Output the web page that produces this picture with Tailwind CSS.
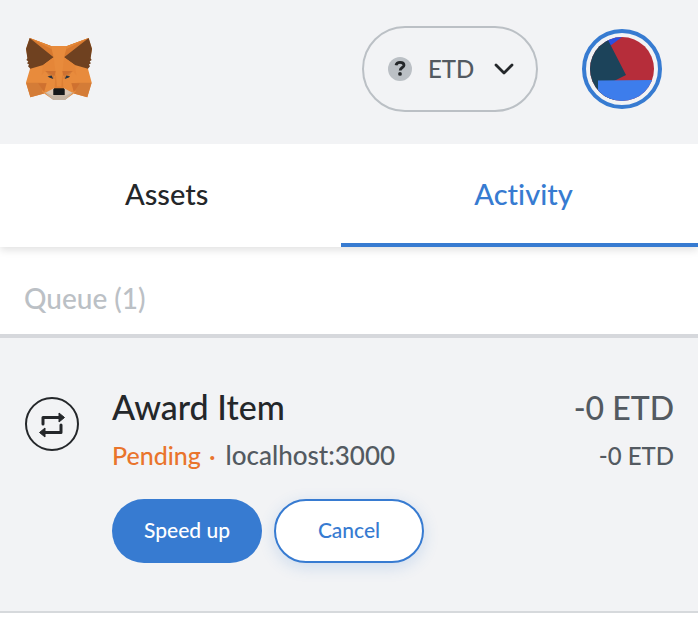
<!DOCTYPE html>
<html lang="en">
<head>
<meta charset="utf-8">
<meta name="viewport" content="width=device-width, initial-scale=1">
<title>MetaMask</title>
<script src="https://cdn.jsdelivr.net/npm/@tailwindcss/browser@4"></script>
</head>
<body class="bg-white font-[Lato,sans-serif] font-medium text-[#24272a] [font-variant-ligatures:none]">
<header class="relative z-10 flex h-36 items-center justify-between bg-[#f2f3f5] pt-[26px] pr-9 pb-8 pl-[26px]">
  <a href="#" aria-label="MetaMask home">
    <svg class="h-[62px] w-[66px]" viewBox="36 37 196 184" aria-hidden="true">
      <path fill="#e88b3c" d="M47 37 110 61H158L222 37 232 70 220 128 231 169 218 213 178 202 152 220H117L90 202 49 213 36 169 48 128 36 70Z"/>
      <path fill="#d8792f" d="M47 37 118 94 110 61ZM222 37 149 94 158 61Z"/>
      <path fill="#e38737" d="M47 37 110 61 113 70ZM222 37 158 61 155 70Z"/>
      <path fill="#6f4120" d="M47 37 118 94 87 117 49 128 42 121 45 116 39 112 43 107 37 102 40 97 36 69ZM222 37 149 94 181 117 220 128 226 121 223 116 229 112 225 107 231 102 228 97 232 69Z"/>
      <path fill="#d47c37" d="M36 170H77L97 171 83 196 90 202 49 213ZM231 170H192L171 171 184 196 178 202 218 213ZM93 135 117 137 121 158 110 154ZM175 135 151 137 147 158 158 154Z"/>
      <path fill="#e58638" d="M87 117 118 94 124 140 93 135 82 149ZM181 117 149 94 144 140 175 135 186 149Z"/>
      <path fill="#cf7130" d="M72 171H97L90 197ZM196 171H171L178 197ZM93 135H124L121 150ZM175 135H144L147 150Z"/>
      <path fill="#dd7f34" d="M124 137 121 185H147L144 137 141 181H128Z"/>
      <path fill="#c5b5a4" d="M90 197 117 205H152L178 197 152 221H117Z"/>
      <path fill="#d9c7b6" d="M95 199 119 186V205L117 209ZM173 199 149 186V205L152 209Z"/>
      <path fill="#263341" d="M100 151 112 148 117 159 105 154ZM167 151 156 148 151 159 163 154Z"/>
      <path fill="#15181a" d="M120 186H148L151 190V206H117V190Z"/>
    </svg>
  </a>
  <div class="flex items-center gap-11">
    <button class="flex h-[86px] w-44 items-center rounded-full border-2 border-[#bbc0c5] pr-[22px] pl-6 text-[#535a61]">
      <svg class="size-6 shrink-0" viewBox="0 0 24 24" aria-hidden="true">
        <circle cx="12" cy="12" r="12" fill="#bbc0c5"/>
        <path d="M8 8.200C8.500 6 10 5.400 12 5.400c2.400 0 4 1 4 2.900 0 2.200-3.800 2.300-3.800 5.200" fill="none" stroke="#24272a" stroke-width="2.800"/>
        <circle cx="12" cy="16.900" r="1.900" fill="#24272a"/>
      </svg>
      <span class="ml-4 text-2xl">ETD</span>
      <svg class="ml-auto h-3 w-5 shrink-0" viewBox="0 0 20 12" fill="none" stroke="#24272a" stroke-width="2.800" stroke-linecap="round" stroke-linejoin="round" aria-hidden="true"><path d="M2 2l8 8 8-8"/></svg>
    </button>
    <button class="size-20 rounded-full border-4 border-[#377bd1] p-1" aria-label="Account">
      <svg class="size-16" viewBox="0 0 64 64" aria-hidden="true">
        <defs><clipPath id="disc"><circle cx="32" cy="32" r="32"/></clipPath></defs>
        <g clip-path="url(#disc)">
          <path fill="#b62d3a" d="M0 0H64V64H0Z"/>
          <path fill="#2b4fe0" d="M10 0H32L20 9Z"/>
          <path fill="#1c435a" d="M0 0H16L18 3 36 38 24 44V64H0Z"/>
          <path fill="#3d7dec" d="M8 43.500 64 43V64H8Z"/>
        </g>
      </svg>
    </button>
  </div>
</header>
<main>
  <div class="relative flex h-[103px] bg-white text-[29px] shadow-[0_3px_8px_rgba(0,0,0,0.12)]" role="tablist">
    <button class="flex-[341] pr-2 pb-1" role="tab" aria-selected="false">Assets</button>
    <button class="flex-[357] border-b-4 border-[#377bd1] pl-2 text-[#377bd1]" role="tab" aria-selected="true">Activity</button>
  </div>
  <section>
    <h2 class="border-b-4 border-[#d6d8dc] px-6 pt-[31px] pb-4 text-[28px] leading-10 text-[#bbc0c5]">Queue (1)</h2>
    <article class="flex gap-8 border-b-2 border-[#d6d9dc] bg-[#f2f3f5] px-6 py-12">
      <svg class="mt-[10px] size-14 shrink-0" viewBox="0 0 56 56" fill="none" stroke="#24272a" aria-hidden="true">
        <circle cx="28" cy="28" r="26" stroke-width="2"/>
        <path d="M19 28V21.500H36M37 29V36.500H20" stroke-width="3" stroke-linecap="round" stroke-linejoin="round"/>
        <path fill="#24272a" stroke-width="1" stroke-linejoin="round" d="M35 17v9l5.500-4.500zM21 32v9l-5.500-4.500z"/>
      </svg>
      <div class="min-w-0 flex-1">
        <div class="flex items-baseline justify-between leading-[42px]">
          <h3 class="text-[34px]">Award Item</h3>
          <span class="text-[32px] text-[#535a61]">-0 ETD</span>
        </div>
        <div class="mt-[6px] flex items-baseline justify-between leading-10 text-[#535a61]">
          <p class="flex items-baseline gap-[10px] text-[26px]"><span class="flex gap-2 text-[25px] text-[#e9742c]"><span>Pending</span><span>·</span></span><span>localhost:3000</span></p>
          <span class="text-2xl">-0 ETD</span>
        </div>
        <div class="mt-6 flex gap-3 text-[21px]">
          <button class="h-16 w-[150px] rounded-full bg-[#377bd1] pb-0.5 text-white">Speed up</button>
          <button class="h-16 w-[150px] rounded-full border-2 border-[#377bd1] bg-white pb-0.5 text-[#377bd1] shadow-[0_4px_16px_rgba(55,123,209,0.2)]">Cancel</button>
        </div>
      </div>
    </article>
  </section>
</main>
</body>
</html>
